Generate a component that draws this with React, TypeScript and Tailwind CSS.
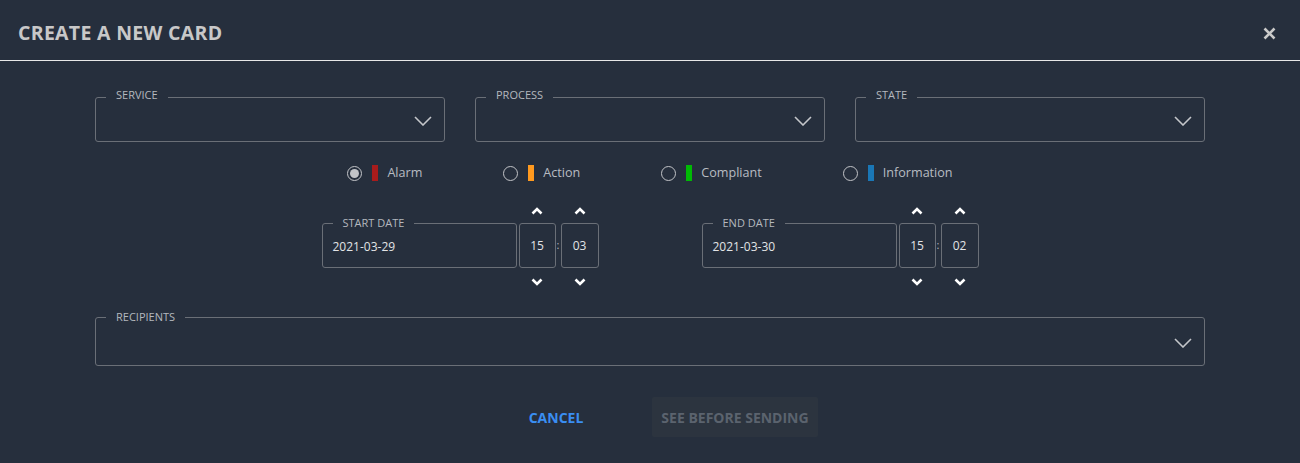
import type { ReactNode } from 'react'

const FONT = { fontFamily: '"Open Sans", "Liberation Sans", sans-serif' }

function ChevronDown({ className }: { className?: string }) {
  return (
    <svg width="18" height="10" viewBox="0 0 18 10" fill="none" className={className}>
      <path d="M1 1l8 8 8-8" stroke="currentColor" strokeWidth="1.6" />
    </svg>
  )
}

function Spin({ up }: { up?: boolean }) {
  return (
    <svg width="12" height="8" viewBox="0 0 12 8" fill="none">
      <path d={up ? 'M1.5 6.5L6 2l4.5 4.5' : 'M1.5 1.5L6 6l4.5-4.5'} stroke="#ffffff" strokeWidth="2.6" />
    </svg>
  )
}

function Outlined({
  label,
  className,
  labelTop,
  children,
}: {
  label: string
  className?: string
  labelTop: string
  children?: ReactNode
}) {
  return (
    <div className={`relative rounded-[3px] border border-[#6a6f77] ${className ?? ''}`}>
      <span className={`absolute left-[10px] bg-[#262f3d] px-[10px] text-[11px] leading-[14px] text-[#b4b8be] ${labelTop}`}>
        {label}
      </span>
      {children}
    </div>
  )
}

function Select({ label, className, labelTop }: { label: string; className?: string; labelTop: string }) {
  return (
    <Outlined label={label} labelTop={labelTop} className={`flex items-center justify-end pr-[12px] ${className ?? ''}`}>
      <ChevronDown className="mt-[2px] text-[#c4c6ca]" />
    </Outlined>
  )
}

function Radio({ label, color, checked }: { label: string; color: string; checked?: boolean }) {
  return (
    <div className="flex h-[16px] items-center">
      <span className="flex h-[15px] w-[15px] items-center justify-center rounded-full border-[1.5px] border-[#c2c4c8]">
        {checked && <span className="h-[9px] w-[9px] rounded-full bg-[#c2c4c8]" />}
      </span>
      <span className={`ml-[10px] h-[16px] w-[6px] ${color}`} />
      <span className="ml-[9px] text-[12.6px] text-[#b8bcc2]">{label}</span>
    </div>
  )
}

function TimeBox({ value, w }: { value: string; w: string }) {
  return (
    <div className="flex flex-col items-center">
      <div className="flex h-[24px] items-center">
        <Spin up />
      </div>
      <div className={`flex h-[45px] items-center justify-center rounded-[3px] border border-[#6a6f77] text-[12px] text-[#e2e4e6] ${w}`}>
        {value}
      </div>
      <div className="flex h-[28px] items-center">
        <Spin />
      </div>
    </div>
  )
}

function DateTime({ label, date, hh, mm }: { label: string; date: string; hh: string; mm: string }) {
  return (
    <div className="flex items-start">
      <Outlined label={label} labelTop="-top-[8px]" className="mt-[24px] h-[45px] w-[195px]">
        <div className="pl-[10px] pt-[14px] text-[12px] text-[#e2e4e6]">{date}</div>
      </Outlined>
      <div className="ml-[2px]">
        <TimeBox value={hh} w="w-[37px]" />
      </div>
      <span className="mt-[24px] flex h-[45px] w-[5px] items-center justify-center text-[11px] text-[#b4b8be]">:</span>
      <TimeBox value={mm} w="w-[38px]" />
    </div>
  )
}

export default function App() {
  return (
    <div className="h-[463px] w-[1300px] overflow-hidden bg-[#262f3d]" style={FONT}>
      <div className="flex h-[61px] items-center justify-between border-b border-[#e8e8e8] pl-[18px] pr-[24px]">
        <h1 className="mt-[6px] text-[19.5px] font-bold tracking-[0.3px] text-[#c8c8c8]">CREATE A NEW CARD</h1>
        <svg width="13" height="13" viewBox="0 0 13 13" className="mt-[7px]">
          <path d="M1.5 1.5l10 10M11.5 1.5l-10 10" stroke="#cacaca" strokeWidth="2.6" />
        </svg>
      </div>

      <div className="mx-auto w-[1110px]">
        <div className="mt-[36px] flex gap-[30px]">
          <Select label="SERVICE" labelTop="-top-[10px]" className="h-[45px] flex-1" />
          <Select label="PROCESS" labelTop="-top-[10px]" className="h-[45px] flex-1" />
          <Select label="STATE" labelTop="-top-[10px]" className="h-[45px] flex-1" />
        </div>

        <div className="mt-[23px] flex justify-center gap-[81px]">
          <Radio label="Alarm" color="bg-[#a81c1c]" checked />
          <Radio label="Action" color="bg-[#ff9a1f]" />
          <Radio label="Compliant" color="bg-[#00ba04]" />
          <Radio label="Information" color="bg-[#1a77b6]" />
        </div>

        <div className="mt-[18px] flex justify-center gap-[103px]">
          <DateTime label="START DATE" date="2021-03-29" hh="15" mm="03" />
          <DateTime label="END DATE" date="2021-03-30" hh="15" mm="02" />
        </div>

        <div className="mt-[21px]">
          <Select label="RECIPIENTS" labelTop="-top-[8px]" className="h-[49px]" />
        </div>

        <div className="mt-[31px] flex justify-center gap-[22px]">
          <button className="h-[40px] w-[148px] text-[14px] font-bold text-[#3a8ef2]">CANCEL</button>
          <button className="h-[40px] w-[166px] rounded-[2px] bg-[#2c343f] text-[14px] font-bold text-[#5b636e]">
            SEE BEFORE SENDING
          </button>
        </div>
      </div>
    </div>
  )
}
